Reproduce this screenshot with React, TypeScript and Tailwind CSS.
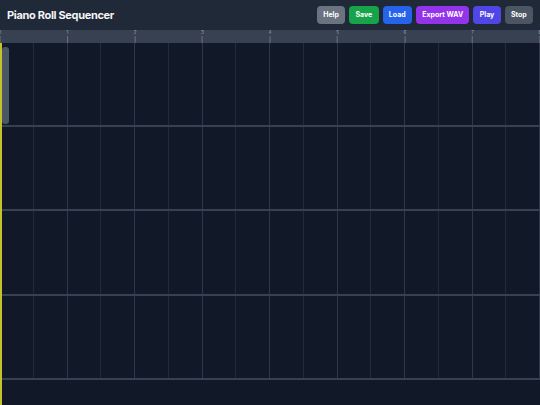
const BUTTONS = [
  { label: "Help", cls: "bg-[#6b7280]" },
  { label: "Save", cls: "bg-[#16a34a]" },
  { label: "Load", cls: "bg-[#2563eb]" },
  { label: "Export WAV", cls: "bg-[#9333ea]" },
  { label: "Play", cls: "bg-[#4f46e5]" },
  { label: "Stop", cls: "bg-[#4b5563]" },
];

const BARS = [0, 1, 2, 3, 4, 5, 6, 7];
const ROWS = [0, 1, 2, 3];
const STEPS = Array.from({ length: 16 }, (_, i) => i);

function Header() {
  return (
    <header className="flex h-[30px] shrink-0 items-center justify-between bg-[#1f2937] pl-[7px] pr-[7px]">
      <h1 className="text-[11px] font-bold tracking-[-0.03em] text-[#f3f4f6]">Piano Roll Sequencer</h1>
      <div className="flex items-center gap-[4px]">
        {BUTTONS.map((b) => (
          <button
            key={b.label}
            className={`h-[18px] rounded-[4px] px-[6.3px] text-[7px] font-bold text-white ${b.cls}`}
          >
            {b.label}
          </button>
        ))}
      </div>
    </header>
  );
}

function Ruler() {
  return (
    <div className="relative grid h-[13px] shrink-0 grid-cols-8 bg-[#374151]">
      {BARS.map((n) => (
        <div key={n} className="relative">
          <div className="absolute left-0 top-0 flex -translate-x-1/2 flex-col items-center">
            <span className="text-[4.5px] leading-[6px] text-[#9ca3af]">{n}</span>
            <span className="h-[7px] w-px bg-[#6b7280]" />
          </div>
        </div>
      ))}
      <div className="absolute right-0 top-0 flex translate-x-1/2 flex-col items-center">
        <span className="text-[4.5px] leading-[6px] text-[#9ca3af]">8</span>
        <span className="h-[7px] w-px bg-[#6b7280]" />
      </div>
    </div>
  );
}

function Row() {
  return (
    <div className="grid h-[84.2px] grid-cols-[repeat(16,minmax(0,1fr))] border-b-2 border-[#374151]">
      {STEPS.map((s) => (
        <div
          key={s}
          className={s % 2 === 1 ? "border-r border-[#2f3848]" : "border-r border-[#232b3a]"}
        />
      ))}
    </div>
  );
}

export default function App() {
  return (
    <div className="flex h-[405px] w-[540px] flex-col overflow-hidden bg-[#111827] font-['Inter',sans-serif]">
      <Header />
      <Ruler />
      <div className="relative flex flex-1 flex-col">
        {ROWS.map((r) => (
          <Row key={r} />
        ))}
        <div className="flex-1" />
        {/* note */}
        <div className="absolute left-[2px] top-[4px] h-[77px] w-[7px] rounded-[3px] bg-[#4b5563]" />
        {/* playhead */}
        <div className="absolute bottom-0 left-0 top-0 w-[1.5px] bg-[#c5c22a]" />
      </div>
    </div>
  );
}
